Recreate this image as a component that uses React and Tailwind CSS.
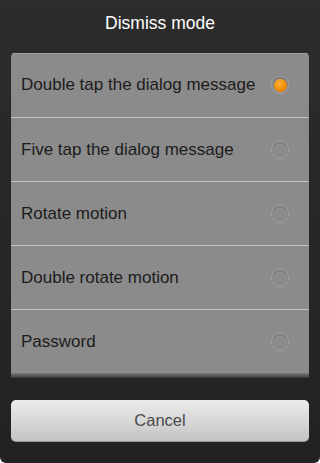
const options = [
  'Double tap the dialog message',
  'Five tap the dialog message',
  'Rotate motion',
  'Double rotate motion',
  'Password',
];

function Radio({ checked }) {
  return (
    <span className="w-[18px] h-[18px] rounded-full border border-[#a3a3a3] bg-[#8b8b8b] shadow-[inset_0_1px_1px_rgba(0,0,0,0.25)] flex items-center justify-center">
      {checked && (
        <span className="w-[13px] h-[13px] rounded-full bg-[radial-gradient(circle_at_40%_35%,#ffb23a,#f08a00_60%,#d86a00)]" />
      )}
    </span>
  );
}

export default function App() {
  return (
    <div className="w-[320px] h-[463px] bg-gradient-to-b from-[#2c2c2c] to-[#222222] flex flex-col font-['Liberation_Sans',Arial,sans-serif] rounded-b-[6px] overflow-hidden">
      <div className="h-[53px] flex items-start justify-center pt-[10px] text-white text-[17.5px]">
        Dismiss mode
      </div>
      <div className="mx-[11px] h-[325px] rounded-t-[4px] overflow-hidden bg-[#8b8b8b] flex flex-col shadow-[0_0_1px_rgba(0,0,0,0.6)]">
        <div className="h-[320px] flex flex-col shadow-[inset_0_1px_0_#a6a6a6]">
          {options.map((o, i) => (
            <div
              key={o}
              className={`h-[64px] shrink-0 flex items-center justify-between pl-[10px] pr-[20px] ${i > 0 ? 'border-t border-[#c2c2c2]' : ''}`}
            >
              <span className="text-[17px] text-[#1c1c1c]">{o}</span>
              <Radio checked={i === 0} />
            </div>
          ))}
        </div>
        <div className="h-[5px] bg-gradient-to-b from-[#7a7a7a] to-[#3a3a3a]" />
      </div>
      <div className="mt-[22px] mx-[11px] h-[42px] rounded-[5px] bg-gradient-to-b from-[#ececec] to-[#c4c4c4] border-b border-[#9a9a9a] flex items-center justify-center text-[16.5px] text-[#4a4a4a]">
        Cancel
      </div>
    </div>
  );
}
